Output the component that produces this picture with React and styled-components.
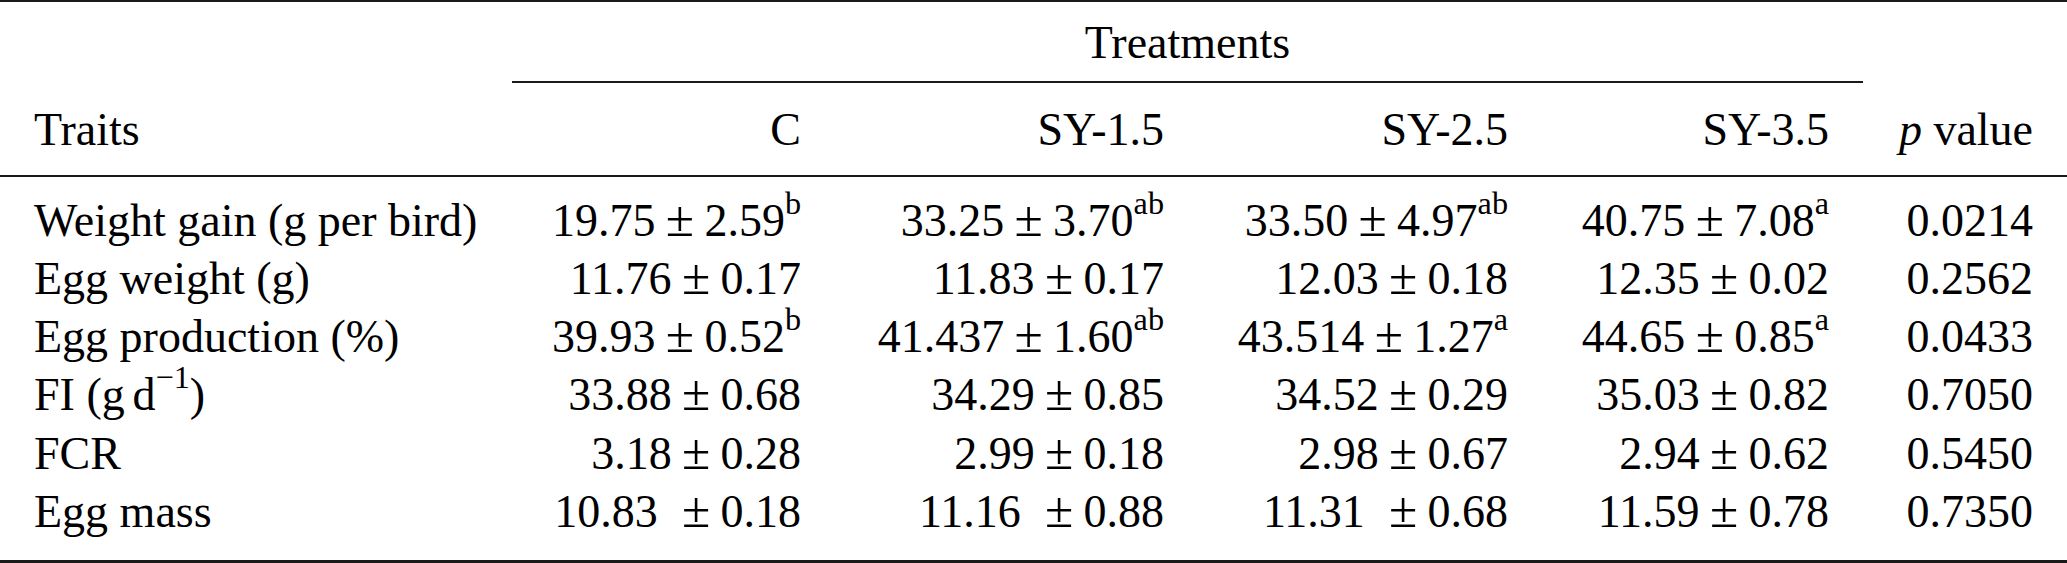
import React from "react";
import styled, { createGlobalStyle, css } from "styled-components";

const Global = createGlobalStyle`
  *, *::before, *::after { box-sizing: border-box; }
  html, body { margin: 0; padding: 0; background: #fff; }
  body {
    font-family: "Liberation Serif", "Times New Roman", serif;
    color: #000;
  }
`;

const RULE = "#1a1a1a";

const columns = css`
  display: grid;
  grid-template-columns: 512px 323px 363px 344px 321px 1fr;
`;

const Table = styled.div`
  width: 2067px;
  font-size: 46px;
  border-top: 2px solid ${RULE};
  border-bottom: 3px solid ${RULE};
`;

const Head = styled.div`
  ${columns};
  border-bottom: 2px solid ${RULE};
`;

const Body = styled.div`
  ${columns};
  grid-auto-rows: 58.2px;
  padding: 14.85px 0 19px;
`;

const Cell = styled.div`
  padding: 0 34px;
  white-space: nowrap;
  line-height: 46px;
  text-align: ${(p) => (p.$left ? "left" : "right")};
`;

const GroupCell = styled(Cell)`
  grid-column: 2 / 6;
  text-align: center;
  height: 81px;
  padding-top: 17.5px;
  border-bottom: 2px solid ${RULE};
`;

const HeadCell = styled(Cell)`
  height: 92px;
  padding-top: 23.5px;
`;

const BodyCell = styled(Cell)`
  line-height: 58.2px;
`;

const Pm = styled.span`
  font-size: 1.12em;
  line-height: 0;
  margin: 0 0.2em 0 ${(p) => (p.$wide ? "0.47em" : "0.2em")};
`;

const Sup = styled.span`
  font-size: 0.7em;
  line-height: 0;
  vertical-align: 0.68em;
`;

const Thin = styled.span`
  display: inline-block;
  width: 0.17em;
`;

const Italic = styled.i`
  font-style: italic;
`;

const Value = ({ m, s, sup, wide }) => (
  <>
    {m}
    <Pm $wide={wide}>±</Pm>
    {s}
    {sup && <Sup>{sup}</Sup>}
  </>
);

const rows = [
  {
    label: "Weight gain (g per bird)",
    vals: [
      ["19.75", "2.59", "b"],
      ["33.25", "3.70", "ab"],
      ["33.50", "4.97", "ab"],
      ["40.75", "7.08", "a"],
    ],
    p: "0.0214",
  },
  {
    label: "Egg weight (g)",
    vals: [
      ["11.76", "0.17"],
      ["11.83", "0.17"],
      ["12.03", "0.18"],
      ["12.35", "0.02"],
    ],
    p: "0.2562",
  },
  {
    label: "Egg production (%)",
    vals: [
      ["39.93", "0.52", "b"],
      ["41.437", "1.60", "ab"],
      ["43.514", "1.27", "a"],
      ["44.65", "0.85", "a"],
    ],
    p: "0.0433",
  },
  {
    label: (
      <>
        FI (g<Thin />d<Sup>−1</Sup>)
      </>
    ),
    vals: [
      ["33.88", "0.68"],
      ["34.29", "0.85"],
      ["34.52", "0.29"],
      ["35.03", "0.82"],
    ],
    p: "0.7050",
  },
  {
    label: "FCR",
    vals: [
      ["3.18", "0.28"],
      ["2.99", "0.18"],
      ["2.98", "0.67"],
      ["2.94", "0.62"],
    ],
    p: "0.5450",
  },
  {
    label: "Egg mass",
    vals: [
      ["10.83", "0.18", null, true],
      ["11.16", "0.88", null, true],
      ["11.31", "0.68", null, true],
      ["11.59", "0.78"],
    ],
    p: "0.7350",
  },
];

const headers = ["C", "SY-1.5", "SY-2.5", "SY-3.5"];

export default function App() {
  return (
    <>
      <Global />
      <Table>
        <Head>
          <Cell />
          <GroupCell>Treatments</GroupCell>
          <Cell />
          <HeadCell $left>Traits</HeadCell>
          {headers.map((h) => (
            <HeadCell key={h}>{h}</HeadCell>
          ))}
          <HeadCell>
            <Italic>p</Italic> value
          </HeadCell>
        </Head>
        <Body>
          {rows.map((r, i) => (
            <React.Fragment key={i}>
              <BodyCell $left>{r.label}</BodyCell>
              {r.vals.map(([m, s, sup, wide], j) => (
                <BodyCell key={j}>
                  <Value m={m} s={s} sup={sup} wide={wide} />
                </BodyCell>
              ))}
              <BodyCell>{r.p}</BodyCell>
            </React.Fragment>
          ))}
        </Body>
      </Table>
    </>
  );
}
